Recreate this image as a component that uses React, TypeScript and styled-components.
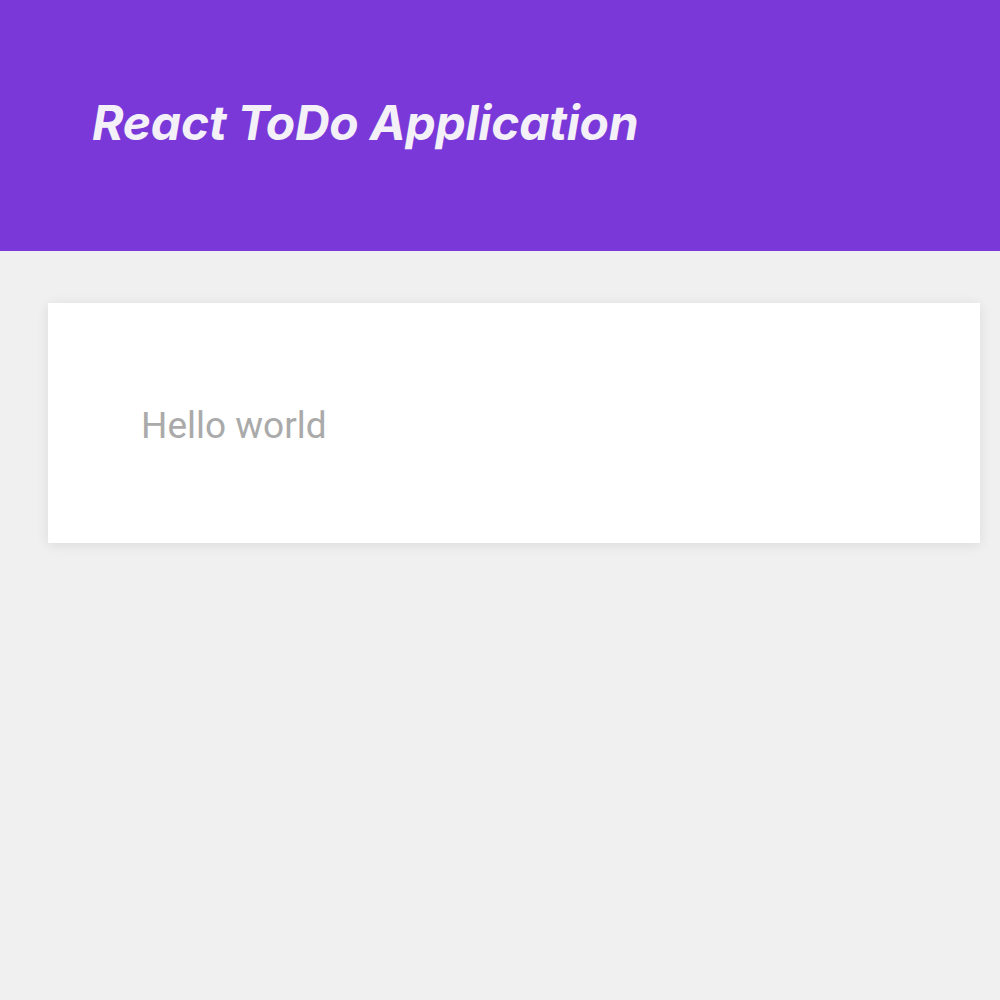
import React from "react";
import styled, { createGlobalStyle } from "styled-components";

const Global = createGlobalStyle`
  html, body { margin: 0; padding: 0; background: #f0f0f0; }
  body { font-family: Inter, "Noto Sans", sans-serif; }
`;

const Page = styled.div`
  min-height: 1000px;
  background: #f0f0f0;
`;

const Header = styled.header`
  height: 251px;
  background: #7b38d8;
  display: flex;
  align-items: center;
  padding: 0 0 0 92px;
  box-sizing: border-box;
`;

const Title = styled.h1`
  margin: 0 0 6px 0;
  font-family: Inter, sans-serif;
  font-style: italic;
  font-weight: 700;
  font-size: 48px;
  letter-spacing: -0.2px;
  color: #f3f0f8;
`;

const Main = styled.main`
  padding: 52px 20px 0 48px;
`;

const Card = styled.section`
  height: 240px;
  background: #ffffff;
  box-shadow: 0 2px 12px rgba(0, 0, 0, 0.09);
  display: flex;
  align-items: center;
  padding-left: 93px;
  box-sizing: border-box;
`;

const Item = styled.p`
  margin: 4px 0 0 0;
  font-family: Roboto, sans-serif;
  font-size: 37px;
  font-weight: 400;
  color: #aaaaaa;
`;

export default function App() {
  return (
    <Page>
      <Global />
      <Header>
        <Title>React ToDo Application</Title>
      </Header>
      <Main>
        <Card>
          <Item>Hello world</Item>
        </Card>
      </Main>
    </Page>
  );
}
